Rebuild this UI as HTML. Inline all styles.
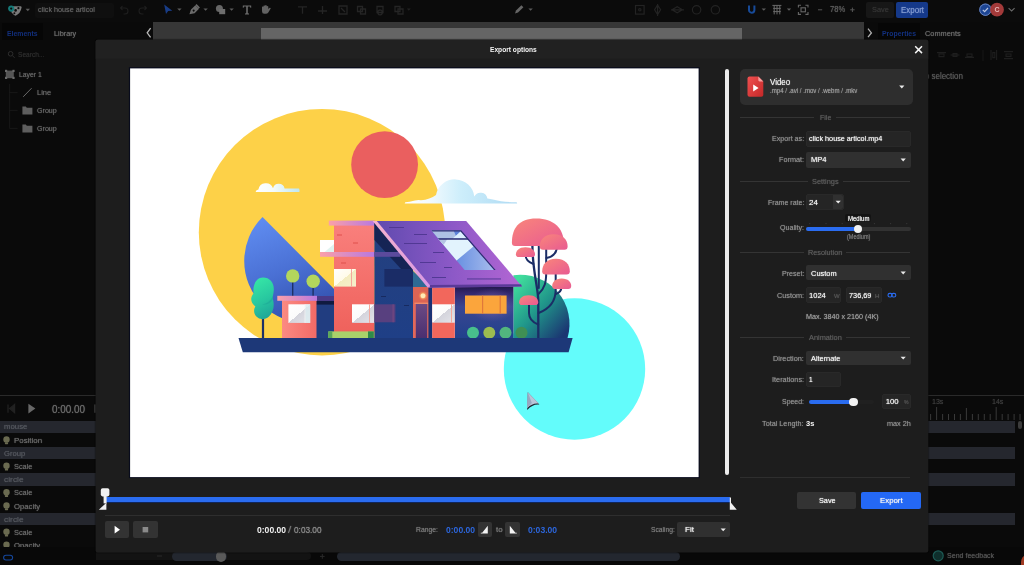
<!DOCTYPE html>
<html><head><meta charset="utf-8"><title>Export options</title>
<style>
*{box-sizing:border-box;margin:0;padding:0}
html,body{width:1024px;height:565px;overflow:hidden;background:#0a0a0a}
body{font-family:"Liberation Sans",sans-serif;font-size:8px;color:#8a8a8a;position:relative}
.a{position:absolute}
.t{position:absolute;white-space:nowrap;line-height:12px;transform-origin:0 50%;text-shadow:0 0 1px currentColor}
.layer{position:absolute;left:0;top:0;width:1024px;height:565px;will-change:transform}
#modal{left:95.2px;top:39.4px;width:833.2px;height:513.3px;background:#1d1d1d;border-radius:2px;box-shadow:0 0 3px rgba(0,0,0,.3)}
#mhead{left:95.2px;top:39.4px;width:833.2px;height:19.4px;background:#212121;border-radius:2px 2px 0 0}
.row{left:0;width:1014.6px;height:12.4px;background:#25272e}
.inp{background:#252525;border:1px solid #292929;border-radius:2px}
.sel{background:#303030;border-radius:2px}
.sep{height:1px;background:#343434}
.btn{background:#333;border-radius:2px}
</style></head><body>
<div id="bg" class="layer">
<!-- top toolbar -->
<div class="a" style="left:0;top:0;width:1024px;height:22.3px;background:#0b0b0b"></div>
<div class="a" style="left:35px;top:3px;width:79px;height:15px;background:#0f0f0f;border-radius:2px"></div>
<div class="a" style="left:866px;top:1.5px;width:28px;height:16.8px;background:#171717;border-radius:2px"></div>
<div class="a" style="left:896.3px;top:1.5px;width:32px;height:16.8px;background:#15398a;border-radius:2px"></div>
<!-- tab row -->
<div class="a" style="left:2px;top:23px;width:41px;height:17px;background:#060606"></div>
<div class="a" style="left:877.6px;top:23px;width:42px;height:17px;background:#060606"></div>
<div class="a" style="left:152.8px;top:22.3px;width:711.6px;height:17.7px;background:#373737"></div>
<div class="a" style="left:261px;top:27.8px;width:480.6px;height:12.2px;background:#656565"></div>
<!-- timeline -->
<div class="a" style="left:0;top:394.8px;width:1024px;height:1px;background:#2a2a2a"></div>
<div class="a row" style="top:420.8px"></div>
<div class="a row" style="top:447px"></div>
<div class="a row" style="top:473.2px"></div>
<div class="a row" style="top:513px"></div>
<div class="a" style="left:1017.6px;top:420.6px;width:4.6px;height:8.6px;background:#3c3c3c;border-radius:2.3px"></div>
<svg class="a" style="left:0;top:0" width="1024" height="565" viewBox="0 0 1024 565">
<!-- logo -->
<path d="M11.5 6.2 L20.8 6.2 Q21.8 6.4 21.6 7.6 Q20.6 13.6 15.6 15.8 Q13.4 15 11.5 12.6 Z" fill="#7a7a7a"/>
<circle cx="11.2" cy="8.6" r="3.1" fill="#167a78"/>
<circle cx="11.2" cy="8.6" r="1.1" fill="#0b0b0b"/>
<circle cx="15.6" cy="10.4" r="1.3" fill="#0b0b0b"/><circle cx="18.4" cy="8.2" r="1.1" fill="#0b0b0b"/><circle cx="14.4" cy="13.2" r="1" fill="#0b0b0b"/>
<path d="M25.6 8.8 h4.4 l-2.2 2.4z" fill="#5c5c5c"/>
<!-- undo redo -->
<g fill="none" stroke="#1e1e1e" stroke-width="1.1"><path d="M120.5 8 h4.5 a3 3 0 0 1 0 6 h-1.5 M122.5 6 l-2 2 l2 2"/><path d="M146.5 8 h-4.5 a3 3 0 0 0 0 6 h1.5 M144.5 6 l2 2 l-2 2"/></g>
<!-- tools -->
<path d="M164.2 4.6 L172.3 10.8 L168.2 11 L166 14 Z" fill="#183c86"/>
<g fill="#5c5c5c"><path d="M177.2 8.4 h4.4 l-2.2 2.4z"/><path d="M203.4 8.4 h4.4 l-2.2 2.4z"/><path d="M229.4 8.4 h4.4 l-2.2 2.4z"/><path d="M528.4 8.4 h4.4 l-2.2 2.4z"/><path d="M761.6 8.4 h4.4 l-2.2 2.4z"/><path d="M786.8 8.4 h4.4 l-2.2 2.4z"/></g>
<path d="M189.4 14.2 L191 9.6 L195.4 5.2 L199 8.8 L194.6 13.2 Z M193.6 9.4 a1 1 0 1 0 .1 0z" fill="#6a6a6a" fill-rule="evenodd"/>
<path d="M196 4.6 l3.4 3.4" stroke="#6a6a6a" stroke-width="1.6"/>
<circle cx="219.4" cy="8.4" r="3.5" fill="#666"/><rect x="219.2" y="9" width="6" height="5.2" fill="#6e6e6e"/>
<path d="M242.8 5.6 h8.4 v2.2 h-0.8 l-0.4 -1.2 h-2.2 v6.6 l1.2 0.4 v0.8 h-4 v-0.8 l1.2 -0.4 v-6.6 h-2.2 l-0.4 1.2 h-0.8z" fill="#6c6c6c"/>
<path d="M262 9 v-2.2 q.9 -.8 1.5 0 v-1 q.9 -.8 1.6 0 v-.4 q.9 -.8 1.6 0 v.8 q.9 -.6 1.6 .2 v2.6 l1.4 -1.2 q1 -.2 1 .8 l-2.4 4 q-.8 1.2 -2.6 1.2 h-1.4 q-2.3 0 -2.3 -2.6z" fill="#636363"/>
<g stroke="#252525" stroke-width="1.3" fill="none">
<path d="M298 6.8 h9 M302.5 6.8 v7"/><path d="M318 11 h9 M322.5 6 v8"/><path d="M339 6 h8 v8 h-8z M341 8 l4 4"/><path d="M357.5 6.5 h5 v5 h-5z M360.5 9 h5 v5 h-5z"/><path d="M377 6.5 h6 v6 h-6z M380 10 a2.4 2.4 0 1 0 .1 0"/><path d="M395 6.5 h5 v5 h-5z M398 9 h5 v5 h-5z"/>
</g>
<path d="M406.8 8.6 h4 l-2 2.2z" fill="#222"/>
<path d="M515 13.6 L516 10.6 L521.4 5.2 L523.4 7.2 L518 12.6 Z" fill="#666"/>
<g stroke="#232323" stroke-width="1.2" fill="none"><rect x="635.5" y="5.5" width="8.6" height="8.6"/><circle cx="639.8" cy="9.8" r="1.2"/><path d="M657.6 5 l3 4.8 l-3 4.8 l-3 -4.8z M657.6 4 v12"/><path d="M672 9.8 l5.2 -3 l5.2 3 l-5.2 3z M671 9.8 h13"/><circle cx="696.6" cy="9.8" r="4.2"/><circle cx="715.4" cy="9.8" r="4.2"/></g>
<!-- magnet -->
<path d="M749 5.6 v4.4 a2.7 2.7 0 0 0 5.4 0 v-4.4" stroke="#174a98" stroke-width="2" fill="none"/>
<!-- grid -->
<g stroke="#6a6a6a" stroke-width="1" fill="none"><path d="M772.4 5.4 h9 M774.2 5.4 v9 M777 5.4 v9 M779.8 5.4 v9 M773.2 8.4 h7.6 M773.2 11.6 h7.6"/></g>
<!-- frame -->
<g stroke="#666" stroke-width="1.1" fill="none"><path d="M798.4 7.6 v-2.4 h2.6 M805.4 5.2 h2.6 v2.4 M808 12 v2.4 h-2.6 M801 14.4 h-2.6 v-2.4"/><rect x="801" y="7.8" width="4.4" height="4"/></g>
<path d="M818 9.8 h4.2 M850.2 9.8 h4.4 M852.4 7.6 v4.4" stroke="#555" stroke-width="1"/>
<!-- avatars -->
<circle cx="985.4" cy="9.7" r="6.2" fill="#1c4594"/><circle cx="985.4" cy="9.7" r="5.7" fill="none" stroke="#7f97cc" stroke-width="0.8"/>
<path d="M982.8 9.8 l1.8 1.8 l3.4 -3.6" stroke="#b8c4e0" stroke-width="1.2" fill="none"/>
<circle cx="997" cy="9.7" r="6.9" fill="#a33a3a"/>
<path d="M1008.6 8.2 l3 2.8 l3 -2.8" stroke="#6a6a6a" stroke-width="1.1" fill="none"/>
<!-- chevrons -->
<path d="M150.6 28.2 l-3.4 4.6 l3.4 4.6" stroke="#b8b8b8" stroke-width="1.3" fill="none"/>
<path d="M868 28.6 l3.4 4.3 l-3.4 4.3" stroke="#b0b0b0" stroke-width="1.3" fill="none"/>
<!-- search icon -->
<circle cx="10.6" cy="53.8" r="2.3" stroke="#2e2e2e" stroke-width="1" fill="none"/><path d="M12.4 55.6 l2.2 2.2" stroke="#2e2e2e" stroke-width="1"/>
<!-- layer tree -->
<rect x="5.8" y="70.6" width="8" height="7.6" fill="#555"/><g fill="#6a6a6a"><rect x="5" y="69.8" width="2.2" height="2.2"/><rect x="12.4" y="69.8" width="2.2" height="2.2"/><rect x="5" y="76.8" width="2.2" height="2.2"/><rect x="12.4" y="76.8" width="2.2" height="2.2"/></g>
<path d="M9.6 84 v44.4 M9.6 92.6 h8 M9.6 110.4 h8 M9.6 128.4 h8" stroke="#1c1c1c" stroke-width="0.8" fill="none"/>
<path d="M23.2 96.8 l8.4 -8.6" stroke="#6a6a6a" stroke-width="1"/>
<path d="M22.4 106.6 h3.4 l1 1.2 h5.6 v6.6 h-10z" fill="#5e5e5e"/>
<path d="M22.4 124.6 h3.4 l1 1.2 h5.6 v6.6 h-10z" fill="#5e5e5e"/>
<!-- right panel dim icons -->
<g stroke="#1e1e1e" stroke-width="1.1" fill="none"><path d="M937 52.6 h9 M939 54 h5 v2.6 h-5z"/><path d="M950.5 55 h9 M953 53.6 h4 v2.8 h-4z"/><path d="M965 57.4 h9 M967 54 h5 v2.6 h-5z"/><path d="M991 50 v10 M996.6 50 v10 M992.8 52.6 h2 v5 h-2z"/><path d="M1004 51.6 h9 M1004 58.6 h9 M1006 54 h5 v2.4 h-5z"/></g>
<path d="M983 50 v11" stroke="#161616" stroke-width="1"/>
<!-- timeline controls -->
<path d="M28.4 403.8 L35.4 408.6 L28.4 413.4 Z" fill="#686868"/>
<path d="M8 404.4 v8.4 M14.6 404.4 L9.6 408.6 L14.6 412.8 Z" stroke="#222" stroke-width="1.2" fill="#222"/>
<rect x="94" y="404.4" width="2.4" height="8.4" fill="#333"/>
<!-- bulbs -->
<g fill="#6a6a50"><circle cx="6.5" cy="439.4" r="3.2"/><rect x="4.9" y="442.2" width="3.2" height="2" rx=".6"/>
<circle cx="6.5" cy="465.8" r="3.2"/><rect x="4.9" y="468.6" width="3.2" height="2" rx=".6"/>
<circle cx="6.5" cy="492.2" r="3.2"/><rect x="4.9" y="495" width="3.2" height="2" rx=".6"/>
<circle cx="6.5" cy="505.4" r="3.2"/><rect x="4.9" y="508.2" width="3.2" height="2" rx=".6"/>
<circle cx="6.5" cy="531.8" r="3.2"/><rect x="4.9" y="534.6" width="3.2" height="2" rx=".6"/>
<circle cx="6.5" cy="544.8" r="3.2"/></g>
<!-- ruler ticks -->
<g stroke="#3e3e3e" stroke-width="0.9">
<path d="M936.6 407 v13 M966.4 408 v12 M996.2 407 v13"/>
<path d="M930.6 414 v6 M942.6 414 v6 M948.5 414 v6 M954.5 414 v6 M960.4 414 v6 M972.4 414 v6 M978.3 414 v6 M984.3 414 v6 M990.2 414 v6 M1002.2 414 v6 M1008.1 414 v6 M1014.1 414 v6 M1020 414 v6"/></g>
</svg>
<span class="t" style="left:37.5px;top:4.2px;font-size:7.77px;color:#606060;transform:scaleX(0.929)">click house articol</span>
<span class="t" style="left:829.5px;top:4.2px;font-size:8.16px;color:#5e5e5e;transform:scaleX(0.928)">78%</span>
<span class="t" style="left:871.7px;top:4.3px;font-size:7.97px;color:#343434;transform:scaleX(0.927)">Save</span>
<span class="t" style="left:901.3px;top:4.3px;font-size:8.6px;color:#8199d0;transform:scaleX(0.926)">Export</span>
<span class="t" style="left:7.0px;top:27.8px;font-size:7.42px;color:#122f7c;font-weight:bold;text-shadow:none;transform:scaleX(0.929)">Elements</span>
<span class="t" style="left:54.4px;top:27.8px;font-size:7.84px;color:#6c6c6c;transform:scaleX(0.929)">Library</span>
<span class="t" style="left:882.0px;top:27.9px;font-size:7.41px;color:#12307e;font-weight:bold;text-shadow:none;transform:scaleX(0.928)">Properties</span>
<span class="t" style="left:924.5px;top:27.9px;font-size:7.94px;color:#6a6a6a;transform:scaleX(0.929)">Comments</span>
<span class="t" style="left:18.0px;top:49.2px;font-size:7.1px;color:#2c2c2c;transform:scaleX(0.929)">Search...</span>
<span class="t" style="left:18.8px;top:69.1px;font-size:7.36px;color:#666;transform:scaleX(0.928)">Layer 1</span>
<span class="t" style="left:36.5px;top:87.0px;font-size:8px;color:#666;transform:scaleX(0.935)">Line</span>
<span class="t" style="left:36.5px;top:104.8px;font-size:7.64px;color:#666;transform:scaleX(0.930)">Group</span>
<span class="t" style="left:36.5px;top:122.9px;font-size:7.64px;color:#666;transform:scaleX(0.930)">Group</span>
<span class="t" style="left:919.3px;top:69.7px;font-size:8.6px;color:#585858;transform:scaleX(0.930)">No selection</span>
<span class="t" style="left:51.7px;top:402.9px;font-size:10.5px;color:#6a6a6a;transform:scaleX(0.945)">0:00.00</span>
<span class="t" style="left:4.0px;top:421.4px;font-size:8px;color:#54575e;transform:scaleX(0.972)">mouse</span>
<span class="t" style="left:14.0px;top:434.6px;font-size:8px;color:#6a6a6a;transform:scaleX(0.985)">Position</span>
<span class="t" style="left:4.0px;top:447.8px;font-size:8px;color:#54575e;transform:scaleX(0.951)">Group</span>
<span class="t" style="left:14.0px;top:461.0px;font-size:8px;color:#6a6a6a;transform:scaleX(0.922)">Scale</span>
<span class="t" style="left:4.0px;top:474.2px;font-size:8px;color:#54575e;transform:scaleX(1.052)">circle</span>
<span class="t" style="left:14.0px;top:487.4px;font-size:8px;color:#6a6a6a;transform:scaleX(0.922)">Scale</span>
<span class="t" style="left:14.0px;top:500.6px;font-size:8px;color:#6a6a6a;transform:scaleX(0.963)">Opacity</span>
<span class="t" style="left:4.0px;top:513.8px;font-size:8px;color:#54575e;transform:scaleX(1.052)">circle</span>
<span class="t" style="left:14.0px;top:527.0px;font-size:8px;color:#6a6a6a;transform:scaleX(0.922)">Scale</span>
<span class="t" style="left:14.0px;top:540.0px;font-size:8px;color:#6a6a6a;transform:scaleX(0.963)">Opacity</span>
<span class="t" style="left:932.3px;top:395.7px;font-size:7.5px;color:#3c3c3c;transform:scaleX(0.942)">13s</span>
<span class="t" style="left:992.2px;top:395.7px;font-size:7.5px;color:#3c3c3c;transform:scaleX(0.942)">14s</span>
<div class="a" style="left:0;top:546.8px;width:1024px;height:18.2px;background:#080808"></div>
<div class="a" style="left:96px;top:552px;width:214.5px;height:8px;background:#131313;border-radius:0 4px 4px 0"></div>
<div class="a" style="left:171.7px;top:552px;width:55px;height:9px;background:#23272f;border-radius:5px"></div>
<div class="a" style="left:215.8px;top:551.2px;width:10.6px;height:10.6px;background:#5a5a5a;border-radius:50%"></div>
<div class="a" style="left:337.4px;top:552px;width:343px;height:8.5px;background:#23272f;border-radius:5px"></div>
<svg class="a" style="left:0;top:546px" width="1024" height="19" viewBox="0 546 1024 19">
<rect x="3.6" y="555.2" width="9" height="4.8" rx="2.4" fill="none" stroke="#15479c" stroke-width="1.1"/>
<path d="M157 556 h5 M320 556.4 h4.6 M322.3 554 v4.8" stroke="#2a2a2a" stroke-width="1"/>
<circle cx="938.2" cy="555.8" r="5" fill="#0f2f2c" stroke="#1d5a54" stroke-width="1.2"/>
<path d="M1024 556 q-3.4 2 -3 9 h3z" fill="#a03a22"/>
</svg>
<span class="t" style="left:947.4px;top:550.2px;font-size:7.6px;color:#555;transform:scaleX(0.930)">Send feedback</span>
<span class="a" style="left:994.4px;top:3.7px;font-size:7px;line-height:12px;color:#e8b8b8;font-weight:bold">C</span>
</div>
<div id="fg" class="layer">
<svg class="a" style="left:0;top:0" width="1024" height="565" viewBox="0 0 1024 565">
<rect x="94.6" y="38.8" width="834.7" height="514.7" rx="3" fill="#000" opacity="0.25"/>
<rect x="95.6" y="39.8" width="832.7" height="512.7" rx="2" fill="#1d1d1d"/>
<path d="M95.6 58.8 v-17 a2 2 0 0 1 2 -2 h828.7 a2 2 0 0 1 2 2 v17z" fill="#212121"/>
<rect x="128.9" y="67.2" width="570.8" height="410.9" fill="#080b1c"/>
<rect x="130.1" y="68.4" width="568.5" height="408.7" fill="#fff"/>
</svg>
<svg class="a" style="left:130px;top:69px" width="569" height="409" viewBox="130 69 569 409">
<defs>
<linearGradient id="gBlue" x1="0.2" y1="0" x2="0.6" y2="1"><stop offset="0" stop-color="#5f8cf0"/><stop offset="0.5" stop-color="#4a70d4"/><stop offset="1" stop-color="#2f4ca8"/></linearGradient>
<linearGradient id="gRoofBar" x1="0" y1="0" x2="1" y2="0"><stop offset="0" stop-color="#fba0a8"/><stop offset="1" stop-color="#b878e0"/></linearGradient>
<linearGradient id="gRed" x1="0" y1="0" x2="0" y2="1"><stop offset="0" stop-color="#f97f7c"/><stop offset="1" stop-color="#ef625c"/></linearGradient>
<linearGradient id="gRed2" x1="0" y1="0" x2="1" y2="0"><stop offset="0" stop-color="#fb8a82"/><stop offset="1" stop-color="#f26a66"/></linearGradient>
<linearGradient id="gRoof" x1="0" y1="0" x2="1" y2="0"><stop offset="0" stop-color="#5f4aae"/><stop offset="0.5" stop-color="#8a58c6"/><stop offset="1" stop-color="#b466d4"/></linearGradient>
<linearGradient id="gNavy" x1="0" y1="0" x2="0" y2="1"><stop offset="0" stop-color="#24407e"/><stop offset="1" stop-color="#1f3f86"/></linearGradient>
<linearGradient id="gWallR" x1="0" y1="0" x2="0" y2="1"><stop offset="0" stop-color="#22164a"/><stop offset="0.14" stop-color="#33286e"/><stop offset="0.4" stop-color="#3a4692"/><stop offset="1" stop-color="#21418c"/></linearGradient>
<linearGradient id="gSky" x1="0" y1="0" x2="1" y2="1"><stop offset="0" stop-color="#9fb4e8"/><stop offset="0.45" stop-color="#e4eeff"/><stop offset="1" stop-color="#7d9be6"/></linearGradient>
<linearGradient id="gHill" x1="0" y1="0" x2="1" y2="1"><stop offset="0.08" stop-color="#40dc9c"/><stop offset="0.5" stop-color="#20968a"/><stop offset="0.92" stop-color="#1b3672"/></linearGradient>
<linearGradient id="gPink" x1="0" y1="0" x2="1" y2="1"><stop offset="0" stop-color="#f9867a"/><stop offset="1" stop-color="#e85a92"/></linearGradient>
<linearGradient id="gTree" x1="0.3" y1="0" x2="0.6" y2="1"><stop offset="0" stop-color="#36e6a6"/><stop offset="0.55" stop-color="#28c8a0"/><stop offset="1" stop-color="#1ea698"/></linearGradient>
<linearGradient id="gCloud" x1="0" y1="0" x2="1" y2="0"><stop offset="0" stop-color="#ffffff"/><stop offset="0.4" stop-color="#f4fbfc"/><stop offset="1" stop-color="#bfe6ee"/></linearGradient>
<linearGradient id="gWin" x1="0" y1="0" x2="1" y2="1"><stop offset="0" stop-color="#ffffff"/><stop offset="0.5" stop-color="#fbfbfb"/><stop offset="0.5" stop-color="#d4d4dc"/><stop offset="1" stop-color="#e4e4ea"/></linearGradient>
<linearGradient id="gWinY" x1="0" y1="0" x2="1" y2="1"><stop offset="0" stop-color="#ffffff"/><stop offset="0.5" stop-color="#fffbe8"/><stop offset="0.5" stop-color="#f3ecc0"/><stop offset="1" stop-color="#f6f0cc"/></linearGradient>
<radialGradient id="gLamp"><stop offset="0" stop-color="#fff3c0"/><stop offset="0.4" stop-color="#ffc070"/><stop offset="1" stop-color="#f0704a" stop-opacity="0"/></radialGradient>
<linearGradient id="gFas" x1="0" y1="0" x2="1" y2="1"><stop offset="0" stop-color="#f6b2cc"/><stop offset="1" stop-color="#d898e4"/></linearGradient>
<linearGradient id="gCloud2" x1="0" y1="0" x2="1" y2="0"><stop offset="0" stop-color="#ffffff"/><stop offset="0.22" stop-color="#f2fafe"/><stop offset="0.5" stop-color="#cdeefb"/><stop offset="1" stop-color="#aedaf3"/></linearGradient>
<radialGradient id="gGlow"><stop offset="0" stop-color="#8a70b0" stop-opacity="0.85"/><stop offset="1" stop-color="#6a58a0" stop-opacity="0"/></radialGradient>
<linearGradient id="gDoor" x1="0" y1="0" x2="0" y2="1"><stop offset="0" stop-color="#6c4a84"/><stop offset="1" stop-color="#4a2f70"/></linearGradient>
<linearGradient id="gSky2" x1="0" y1="0" x2="1" y2="0"><stop offset="0.3" stop-color="#5f8ae0"/><stop offset="1" stop-color="#a8bcec"/></linearGradient>
</defs>
<!-- big circles -->
<circle cx="322" cy="232.2" r="123.2" fill="#fdd148"/>
<circle cx="574.5" cy="369" r="70.7" fill="#63fcfb"/>
<circle cx="384.6" cy="164.6" r="33.4" fill="#ea5f5f"/>
<!-- clouds -->
<path d="M255.6 192 L299.4 192 Q300 190.4 299 188.6 L284.6 188.4 A6 6 0 0 0 273 188.2 A7.6 7.6 0 0 0 258.4 189.6 Q256 190 255.6 192 Z" fill="url(#gCloud)"/>
<path d="M405 203.6 L517 203.6 Q517.6 202.4 516 202.2 Q502 202 494 199.8 Q490 198.6 487.4 198.4 A7 7 0 0 0 474.3 196.5 A19.4 19.4 0 0 0 436 195 Q430 199.5 421 200.3 Q418 199.6 415 200.6 Q409 202 405.4 202.3 Q404.4 203 405 203.6 Z" fill="url(#gCloud2)"/>
<!-- blue semicircle -->
<path d="M262.5 217 A62 62 0 0 0 350 305 Z" fill="url(#gBlue)"/>
<!-- green hill -->
<path d="M513.4 338 L513.4 275.2 A49.3 49.3 0 0 1 567.5 338 Z" fill="url(#gHill)"/>
<!-- left tree -->
<rect x="261.9" y="312" width="2.2" height="27" fill="#1d3066"/>
<path d="M263 277.6 C270 277.6 274.2 283 273.8 290 C273.6 294 272.4 296.5 272.8 299 C274.8 305 273.6 312 269 316.4 C265 320 259.6 320 256.4 316.6 C253.4 313.4 253.6 309.4 255.4 306.6 C250.6 303 249.8 297.4 253.6 293.4 C252.4 285.6 256 277.6 263 277.6 Z" fill="url(#gTree)"/><path d="M272.6 296 C271 301 266.6 303.4 262.4 304.6 C267.6 305 271.6 302.4 272.8 299 Z" fill="#1ea698" opacity="0.55"/>
<!-- small round trees -->
<rect x="292" y="276" width="1.4" height="21" fill="#1d3066"/>
<rect x="312.4" y="282" width="1.4" height="15" fill="#1d3066"/>
<circle cx="292.7" cy="275.9" r="6.7" fill="#b3d65c"/>
<circle cx="313.2" cy="281.2" r="6.7" fill="#b3d65c"/>
<!-- connector dark block -->
<rect x="316" y="296" width="19" height="42" fill="#213d80"/>
<rect x="316" y="296" width="19" height="5" fill="#4a3a88"/><rect x="316" y="301" width="19" height="3.6" fill="#101a40"/>
<!-- small house -->
<rect x="282" y="300" width="34.5" height="38" fill="url(#gRed2)"/>
<rect x="277.3" y="295.8" width="39.7" height="5" fill="url(#gRoofBar)"/>
<rect x="288.4" y="304.3" width="21.8" height="18.6" fill="url(#gWin)"/>
<rect x="304.6" y="304.3" width="1" height="18.6" fill="#f4f4f6"/><rect x="305.6" y="304.3" width="4.6" height="18.6" fill="#dcecf0" opacity="0.8"/>
<!-- main tall house -->
<rect x="334" y="225" width="40.4" height="107" fill="url(#gRed)"/>
<rect x="328.8" y="220.6" width="46" height="5" fill="url(#gRoofBar)"/>
<rect x="337" y="234.5" width="5" height="1" fill="#e0504c"/><rect x="353" y="242.5" width="5" height="1" fill="#e0504c"/><rect x="341" y="262.5" width="5" height="1" fill="#e0504c"/>
<!-- balcony -->
<rect x="320" y="240" width="14" height="12.4" fill="#dff3f0"/>
<path d="M320 240 h14 v4 l-10 8.4 h-4z" fill="#ffffff"/>
<rect x="320" y="252" width="54.4" height="4.8" fill="url(#gRoofBar)"/>
<!-- windows main -->
<rect x="334" y="269" width="22" height="17.6" fill="url(#gWinY)"/>
<rect x="351" y="269" width="1" height="17.6" fill="#f4a89c"/>
<rect x="352" y="304.3" width="22.4" height="18.6" fill="url(#gWin)"/>
<rect x="369" y="304.3" width="1" height="18.6" fill="#f4a89c"/>
<!-- navy middle wall -->
<path d="M374.4 221 L378 221 L413 266 L413 338 L374.4 338 Z" fill="url(#gNavy)"/>
<path d="M374.4 222 L413 268 L413 282 L374.4 240 Z" fill="#152352" opacity="0.95"/>
<rect x="374.4" y="252" width="26" height="4.8" fill="#5b4a9c"/>
<rect x="384.4" y="269" width="28.6" height="17.6" fill="#1a2c66"/>
<rect x="374.4" y="304.3" width="21" height="18" fill="#58407f"/>
<rect x="392.6" y="304.3" width="1" height="18" fill="#7a4a80"/>
<rect x="381" y="296" width="5" height="1" fill="#172a60"/><rect x="404" y="305" width="5" height="1" fill="#172a60"/>
<!-- door section -->
<path d="M413 271 L431 288 L431 338 L413 338 Z" fill="#2f6a94"/>
<rect x="413" y="287" width="18.5" height="51" fill="#e2685a"/>
<rect x="413" y="287" width="18.5" height="17" fill="#dc6454"/>
<circle cx="423" cy="295.8" r="5" fill="url(#gLamp)"/>
<circle cx="423" cy="295.8" r="2.4" fill="#ffeab8"/>
<rect x="415.8" y="304" width="11.4" height="34" fill="url(#gDoor)"/>
<rect x="414.5" y="302.6" width="14" height="1.4" fill="#f08a6a"/>
<rect x="428.4" y="287" width="4" height="51" fill="#1c3274"/>
<!-- right wall -->
<rect x="454.8" y="286" width="58.6" height="52" fill="url(#gWallR)"/>
<ellipse cx="492" cy="305" rx="24" ry="17" fill="url(#gGlow)"/>
<!-- red pillar -->
<rect x="432.2" y="287.5" width="22.6" height="50.5" fill="#f2675c"/>
<rect x="432.2" y="304.3" width="22.6" height="18.4" fill="url(#gWin)"/>
<rect x="451" y="304.3" width="1" height="18.4" fill="#f4a89c"/>
<!-- orange window -->
<rect x="465" y="295.5" width="41.6" height="18.2" fill="#fba53c"/>
<rect x="482" y="295.5" width="1.2" height="18.2" fill="#e0783a"/>
<rect x="499.6" y="295.5" width="1.2" height="18.2" fill="#e0783a"/>
<!-- bushes -->
<circle cx="473" cy="332.8" r="6" fill="#48c08c"/>
<circle cx="489.3" cy="332.8" r="6" fill="#9cbc50"/>
<circle cx="505.5" cy="332.8" r="6" fill="#52b67e"/>
<circle cx="521.5" cy="332.8" r="6" fill="#3f9054"/>
<!-- roof -->
<path d="M374.6 221 L466.2 221 L522 286.6 L429.6 287.4 Z" fill="url(#gRoof)"/>
<path d="M372.6 221 L376.8 221 L431.8 287.4 L427.6 287.4 Z" fill="url(#gFas)"/>
<path d="M430 285 L521 284.2 L522 286.6 L429.6 287.8 Z" fill="#5a3a98"/>
<path d="M431.5 230.6 L460.9 230.6 L494.8 269.9 L464.6 269.9 Z" fill="url(#gSky2)"/>
<path d="M438.4 238.9 L467.4 238.9 L473.4 246.4 L456.6 260.6 Z" fill="#e2f3fd"/>
<path d="M438.4 238.9 L447.4 238.9 L443.6 244.8 Z" fill="#b4c6e4"/>
<path d="M431.5 230.6 L460.9 230.6 L467.4 238.4 L438.2 238.4 Z" fill="#aec2e4"/>
<path d="M453.6 230.6 L460.9 230.6 L456 236 Z" fill="#5c82d8"/>
<path d="M460.9 231.4 L466.8 238.4 L452.6 238.4 Z" fill="#dcefff"/>
<path d="M438 238.2 L467.2 238.2 L468.4 239.8 L439.4 239.8 Z" fill="#2c2c70"/>
<path d="M431.5 230.2 L461.2 230.2 L495.6 270.1 L494 270.1 L460.6 231.4 L432.4 231.4 Z" fill="#2e2c72"/>
<g fill="#4d3690"><rect x="389" y="227" width="15" height="0.9"/><rect x="414" y="234" width="13" height="0.9"/><rect x="404" y="243" width="23" height="0.9"/><rect x="433" y="252" width="11" height="0.9"/><rect x="420" y="262" width="16" height="0.9"/><rect x="444" y="267" width="8" height="0.9"/><rect x="432" y="277" width="14" height="0.9"/><rect x="467" y="278.5" width="34" height="0.9"/></g>
<!-- pink tree trunks -->
<g fill="none" stroke="#1b2d66" stroke-width="2" stroke-linecap="round">
<path d="M538.3 338 L538.3 300 C537.6 285 532.4 270 532.4 245" stroke-width="2.3"/>
<path d="M538.5 294 C545 288 546.2 282 546.2 272 L546.2 246"/>
<path d="M538.8 288 L538.8 245"/>
<path d="M538.6 313 C549 309 555.6 302 555.7 290 L555.7 272"/>
<path d="M555.7 294 C559.5 293 561.4 290.5 561.4 287"/>
<path d="M546.4 258 C552 257 556 254 557 248"/>
<path d="M533.4 264 C528 262 525.6 259 525.6 255"/>
<path d="M538.3 324.5 C531.5 322 529 318 529 313 L529 303"/>
</g>
<!-- canopies -->
<path d="M515.1 245.9 Q511.9 245.9 511.9 242.7 C511.9 228.3 518.6 218.4 536.2 218.4 C553.9 218.4 563.7 228.3 563.7 242.7 Q563.7 245.9 560.5 245.9 Z" fill="url(#gPink)"/>
<path d="M543.0 249.8 Q539.8 249.8 539.8 246.6 C539.8 239.9 544.2 234.3 553.7 234.3 C563.2 234.3 567.6 239.9 567.6 246.6 Q567.6 249.8 564.4 249.8 Z" fill="url(#gPink)"/>
<path d="M518.7 257.1 Q515.9 257.1 515.9 254.3 C515.9 250.8 519.0 247.2 525.5 247.2 C531.9 247.2 535.0 250.8 535.0 254.3 Q535.0 257.1 532.2 257.1 Z" fill="url(#gPink)"/>
<path d="M545.4 274.5 Q542.2 274.5 542.2 271.3 C542.2 264.5 546.6 258.8 556.0 258.8 C565.4 258.8 569.8 264.5 569.8 271.3 Q569.8 274.5 566.6 274.5 Z" fill="url(#gPink)"/>
<path d="M555.1 288.9 Q552.2 288.9 552.2 286.0 C552.2 282.3 555.2 278.6 561.7 278.6 C568.2 278.6 571.2 282.3 571.2 286.0 Q571.2 288.9 568.3 288.9 Z" fill="url(#gPink)"/>
<path d="M521.9 305.1 Q519.1 305.1 519.1 302.3 C519.1 298.8 522.2 295.2 528.7 295.2 C535.1 295.2 538.2 298.8 538.2 302.3 Q538.2 305.1 535.4 305.1 Z" fill="url(#gPink)"/>
<!-- planter -->
<rect x="328.3" y="331.4" width="45.5" height="7" fill="#a9d26a"/>
<rect x="368" y="331.4" width="5.8" height="7" fill="#2f8a4a"/><rect x="328.3" y="331.4" width="4" height="7" fill="#5aa85a"/>
<!-- base -->
<path d="M238.5 338 L572.6 338 L568.6 352.2 L242.8 352.2 Z" fill="#1d3878"/>
<!-- cursor -->
<path d="M527.8 392.3 L539.4 404.6 Q533 403.6 527.2 410 Z" fill="#1c2430"/>
<path d="M527.8 392.3 L538.8 403.6 Q532.6 402.6 527.2 408 Z" fill="#b9c4d8"/>
<path d="M527.8 392.3 L531.8 403 L527.2 408 Z" fill="#98a6c0"/>
</svg>

<!-- scrollbar -->
<div class="a" style="left:725.2px;top:69.2px;width:4.2px;height:405.6px;background:#ececec;border-radius:2.1px"></div>
<!-- right panel boxes -->
<div class="a" style="left:739.6px;top:68.5px;width:173px;height:36.2px;background:#2e2e2e;border-radius:5px"></div>
<div class="a sep" style="left:740px;top:117px;width:74px"></div><div class="a sep" style="left:836.4px;top:117px;width:73.6px"></div>
<div class="a inp" style="left:806px;top:130.8px;width:104.6px;height:15.8px"></div>
<div class="a sel" style="left:806px;top:152.4px;width:104.6px;height:15.2px"></div>
<div class="a sep" style="left:740px;top:181px;width:67.6px"></div><div class="a sep" style="left:842.8px;top:181px;width:67.2px"></div>
<div class="a inp" style="left:806px;top:194.2px;width:38px;height:15.8px"></div>
<div class="a sel" style="left:833px;top:195px;width:10.4px;height:14.2px;border-radius:0 2px 2px 0"></div>
<div class="a" style="left:845px;top:214.4px;width:26px;height:8px;background:#131313;border-radius:2px"></div>
<div class="a" style="left:806px;top:226.6px;width:104.6px;height:4px;background:#323232;border-radius:2px"></div>
<div class="a" style="left:806px;top:226.6px;width:53px;height:4px;background:#2a6cf0;border-radius:2px"></div>
<div class="a" style="left:854px;top:224.5px;width:8.2px;height:8.2px;background:#f2f2f2;border-radius:50%"></div>
<div class="a sep" style="left:740px;top:252px;width:64px"></div><div class="a sep" style="left:846px;top:252px;width:64px"></div>
<div class="a sel" style="left:806px;top:265.4px;width:104.6px;height:15px"></div>
<div class="a inp" style="left:806px;top:287.2px;width:35.2px;height:15.8px"></div>
<div class="a inp" style="left:846px;top:287.2px;width:36.2px;height:15.8px"></div>
<div class="a sep" style="left:740px;top:337.2px;width:64px"></div><div class="a sep" style="left:845.6px;top:337.2px;width:64.4px"></div>
<div class="a sel" style="left:806px;top:350.8px;width:104.6px;height:14.6px"></div>
<div class="a inp" style="left:806px;top:372.4px;width:35.2px;height:14.8px"></div>
<div class="a" style="left:809px;top:399.7px;width:64.6px;height:4px;background:#202020;border-radius:2px"></div>
<div class="a" style="left:809px;top:399.7px;width:45px;height:4px;background:#2a6cf0;border-radius:2px"></div>
<div class="a" style="left:849.4px;top:397.6px;width:8.2px;height:8.2px;background:#f2f2f2;border-radius:50%"></div>
<div class="a inp" style="left:882.4px;top:394.2px;width:28.2px;height:14.8px"></div>
<div class="a sep" style="left:740px;top:476.8px;width:170px;background:#2e2e2e"></div>
<div class="a btn" style="left:796.6px;top:492px;width:59.6px;height:16.8px"></div>
<div class="a" style="left:861px;top:492px;width:60.2px;height:16.8px;background:#2468f4;border-radius:2px"></div>
<!-- bottom slider -->
<div class="a" style="left:105px;top:497.3px;width:625.2px;height:6.2px;background:#2a6cf0;border-bottom:1px solid #10255a"></div>
<div class="a sep" style="left:105.4px;top:514.9px;width:625px;background:#2e2e2e"></div>
<div class="a btn" style="left:105.3px;top:521.2px;width:24.2px;height:17px"></div>
<div class="a btn" style="left:133.1px;top:521.2px;width:24.5px;height:17px"></div>
<div class="a btn" style="left:477.6px;top:522.3px;width:14.8px;height:15px"></div>
<div class="a btn" style="left:505.2px;top:522.3px;width:14.8px;height:15px"></div>
<div class="a sel" style="left:677.2px;top:522.2px;width:52.6px;height:15px"></div>
<svg class="a" style="left:0;top:0" width="1024" height="565" viewBox="0 0 1024 565">
<defs><linearGradient id="gIco" x1="0" y1="0" x2="1" y2="1"><stop offset="0" stop-color="#f05050"/><stop offset="1" stop-color="#c42828"/></linearGradient></defs>
<!-- close -->
<path d="M915.2 46.3 l6.8 6.8 M922 46.3 l-6.8 6.8" stroke="#f4f4f4" stroke-width="1.5"/>
<!-- video icon -->
<path d="M749.5 76.5 h8.8 l5 5 v13.3 a2 2 0 0 1 -2 2 h-11.8 a2 2 0 0 1 -2 -2 v-16.3 a2 2 0 0 1 2 -2z" fill="url(#gIco)"/>
<path d="M758.3 76.5 l5 5 h-3.6 a1.4 1.4 0 0 1 -1.4 -1.4z" fill="#f8a0a0"/>
<path d="M753.2 84.4 l5.4 3.6 l-5.4 3.6z" fill="#fff"/>
<!-- carets -->
<g fill="#eaeaea"><path d="M899.2 85.6 h5.2 l-2.6 2.8z"/><path d="M900.6 158.6 h5.2 l-2.6 2.8z"/><path d="M835.6 200.8 h5.2 l-2.6 2.8z"/><path d="M900.6 271.6 h5.2 l-2.6 2.8z"/><path d="M900.6 356.8 h5.2 l-2.6 2.8z"/><path d="M720.6 528.4 h5.2 l-2.6 2.8z"/></g>
<!-- slider ticks -->
<g fill="#3a3a3a"><circle cx="809.8" cy="223.6" r=".6"/><circle cx="826" cy="223.6" r=".6"/><circle cx="842.2" cy="223.6" r=".6"/><circle cx="874.4" cy="223.6" r=".6"/><circle cx="890.6" cy="223.6" r=".6"/><circle cx="906.8" cy="223.6" r=".6"/></g>
<!-- link -->
<g fill="none" stroke="#2a6cf0" stroke-width="1.1"><rect x="888" y="293.4" width="4.2" height="3.6" rx="1.8"/><rect x="891.6" y="293.4" width="4.2" height="3.6" rx="1.8"/></g>
<!-- playhead -->
<rect x="100.8" y="488.2" width="8.6" height="8.2" rx="1.8" fill="#f0f0f0"/>
<path d="M103.6 496 h3 v7.4 h-3z" fill="#f0f0f0"/>
<path d="M106.4 502.8 v7 h-7.6z" fill="#f0f0f0"/>
<path d="M729.8 497.6 h1.2 v5.2 l5.8 7 h-7z" fill="#f0f0f0"/>
<!-- play/stop -->
<path d="M114.6 525.8 l5.4 3.9 l-5.4 3.9z" fill="#fff"/>
<rect x="142.6" y="527" width="5.6" height="5.4" fill="#8a8a8a"/>
<!-- range icons -->
<path d="M487.8 525.8 v7.8 h-7 v-0.9 h1.4z" fill="#f4f4f4"/>
<path d="M509.8 525.8 v7.8 h7 v-0.9 h-1.4z" fill="#f4f4f4"/>
</svg>
<span class="t" style="left:490.0px;top:44.1px;font-size:8px;color:#f4f4f4;font-weight:bold;text-shadow:none;transform:scaleX(0.829)">Export options</span>
<span class="t" style="left:770.0px;top:75.7px;font-size:8.6px;color:#ececec;transform:scaleX(0.921)">Video</span>
<span class="t" style="left:770.0px;top:85.3px;font-size:7px;color:#9a9a9a;transform:scaleX(0.871)">.mp4 / .avi / .mov / .webm / .mkv</span>
<span class="t" style="left:819.7px;top:111.8px;font-size:8px;color:#5a5a5a;transform:scaleX(0.879)">File</span>
<span class="t" style="left:771.9px;top:133.0px;font-size:7.8px;color:#8c8c8c;transform:scaleX(0.915)">Export as:</span>
<span class="t" style="left:808.9px;top:133.0px;font-size:7.8px;color:#f0f0f0;transform:scaleX(0.929)">click house articol.mp4</span>
<span class="t" style="left:779.0px;top:154.4px;font-size:7.8px;color:#8c8c8c;transform:scaleX(0.931)">Format:</span>
<span class="t" style="left:811.3px;top:154.4px;font-size:7.8px;color:#f0f0f0;transform:scaleX(0.968)">MP4</span>
<span class="t" style="left:811.9px;top:175.8px;font-size:8px;color:#5a5a5a;transform:scaleX(0.921)">Settings</span>
<span class="t" style="left:767.6px;top:196.6px;font-size:7.8px;color:#8c8c8c;transform:scaleX(0.904)">Frame rate:</span>
<span class="t" style="left:808.9px;top:196.6px;font-size:7.8px;color:#f0f0f0;transform:scaleX(1.027)">24</span>
<span class="t" style="left:847.5px;top:213.0px;font-size:6.6px;color:#f4f4f4;transform:scaleX(0.913)">Medium</span>
<span class="t" style="left:780.0px;top:222.0px;font-size:7.8px;color:#8c8c8c;transform:scaleX(0.908)">Quality:</span>
<span class="t" style="left:846.6px;top:231.1px;font-size:6.4px;color:#7a7a7a;transform:scaleX(0.867)">(Medium)</span>
<span class="t" style="left:808.0px;top:246.8px;font-size:8px;color:#5a5a5a;transform:scaleX(0.905)">Resolution</span>
<span class="t" style="left:781.5px;top:267.6px;font-size:7.8px;color:#8c8c8c;transform:scaleX(0.912)">Preset:</span>
<span class="t" style="left:811.3px;top:267.6px;font-size:7.8px;color:#f0f0f0;transform:scaleX(0.957)">Custom</span>
<span class="t" style="left:776.9px;top:289.6px;font-size:7.8px;color:#8c8c8c;transform:scaleX(0.935)">Custom:</span>
<span class="t" style="left:809.0px;top:289.6px;font-size:7.8px;color:#f0f0f0;transform:scaleX(0.969)">1024</span>
<span class="t" style="left:833.6px;top:290.1px;font-size:5.6px;color:#555;transform:scaleX(1.070)">W</span>
<span class="t" style="left:849.4px;top:289.6px;font-size:7.8px;color:#f0f0f0;transform:scaleX(0.940)">736,69</span>
<span class="t" style="left:875.0px;top:290.1px;font-size:5.6px;color:#555;transform:scaleX(1.099)">H</span>
<span class="t" style="left:806.3px;top:311.0px;font-size:7.8px;color:#9a9a9a;transform:scaleX(0.920)">Max. 3840 x 2160 (4K)</span>
<span class="t" style="left:808.9px;top:332.0px;font-size:8px;color:#5a5a5a;transform:scaleX(0.920)">Animation</span>
<span class="t" style="left:773.2px;top:352.6px;font-size:7.8px;color:#8c8c8c;transform:scaleX(0.936)">Direction:</span>
<span class="t" style="left:811.3px;top:352.6px;font-size:7.8px;color:#f0f0f0;transform:scaleX(0.942)">Alternate</span>
<span class="t" style="left:771.9px;top:374.4px;font-size:7.8px;color:#8c8c8c;transform:scaleX(0.938)">Iterations:</span>
<span class="t" style="left:809.0px;top:374.4px;font-size:7.8px;color:#f0f0f0;transform:scaleX(0.835)">1</span>
<span class="t" style="left:782.0px;top:395.8px;font-size:7.8px;color:#8c8c8c;transform:scaleX(0.891)">Speed:</span>
<span class="t" style="left:885.7px;top:395.8px;font-size:7.8px;color:#f0f0f0;transform:scaleX(1.000)">100</span>
<span class="t" style="left:903.9px;top:396.3px;font-size:5.6px;color:#555;transform:scaleX(0.913)">%</span>
<span class="t" style="left:762.4px;top:417.5px;font-size:7.8px;color:#8c8c8c;transform:scaleX(0.930)">Total Length:</span>
<span class="t" style="left:806.0px;top:417.5px;font-size:7.8px;color:#f4f4f4;font-weight:bold;text-shadow:none;transform:scaleX(0.958)">3s</span>
<span class="t" style="left:887.0px;top:417.5px;font-size:7.8px;color:#8c8c8c;transform:scaleX(0.932)">max 2h</span>
<span class="t" style="left:818.5px;top:494.8px;font-size:7.8px;color:#f4f4f4;transform:scaleX(0.935)">Save</span>
<span class="t" style="left:880.0px;top:494.8px;font-size:7.8px;color:#f4f4f4;transform:scaleX(1.004)">Export</span>
<span class="t" style="left:256.7px;top:524.1px;font-size:8.6px;color:#f0f0f0;font-weight:bold;text-shadow:none;transform:scaleX(0.997)">0:00.00</span>
<span class="t" style="left:288.4px;top:524.1px;font-size:8.6px;color:#777;transform:scaleX(1.376)">/</span>
<span class="t" style="left:294.2px;top:524.1px;font-size:8.6px;color:#8a8a8a;transform:scaleX(0.961)">0:03.00</span>
<span class="t" style="left:415.8px;top:524.1px;font-size:7.8px;color:#7a7a7a;transform:scaleX(0.871)">Range:</span>
<span class="t" style="left:445.8px;top:524.1px;font-size:8.6px;color:#2c66dc;font-weight:bold;text-shadow:none;transform:scaleX(0.997)">0:00.00</span>
<span class="t" style="left:496.0px;top:524.1px;font-size:7.8px;color:#7a7a7a;transform:scaleX(1.016)">to</span>
<span class="t" style="left:528.0px;top:524.1px;font-size:8.6px;color:#2c66dc;font-weight:bold;text-shadow:none;transform:scaleX(0.997)">0:03.00</span>
<span class="t" style="left:651.2px;top:524.1px;font-size:7.8px;color:#7a7a7a;transform:scaleX(0.858)">Scaling:</span>
<span class="t" style="left:684.6px;top:524.1px;font-size:7.8px;color:#f0f0f0;transform:scaleX(1.040)">Fit</span>
</div>
</body></html>
